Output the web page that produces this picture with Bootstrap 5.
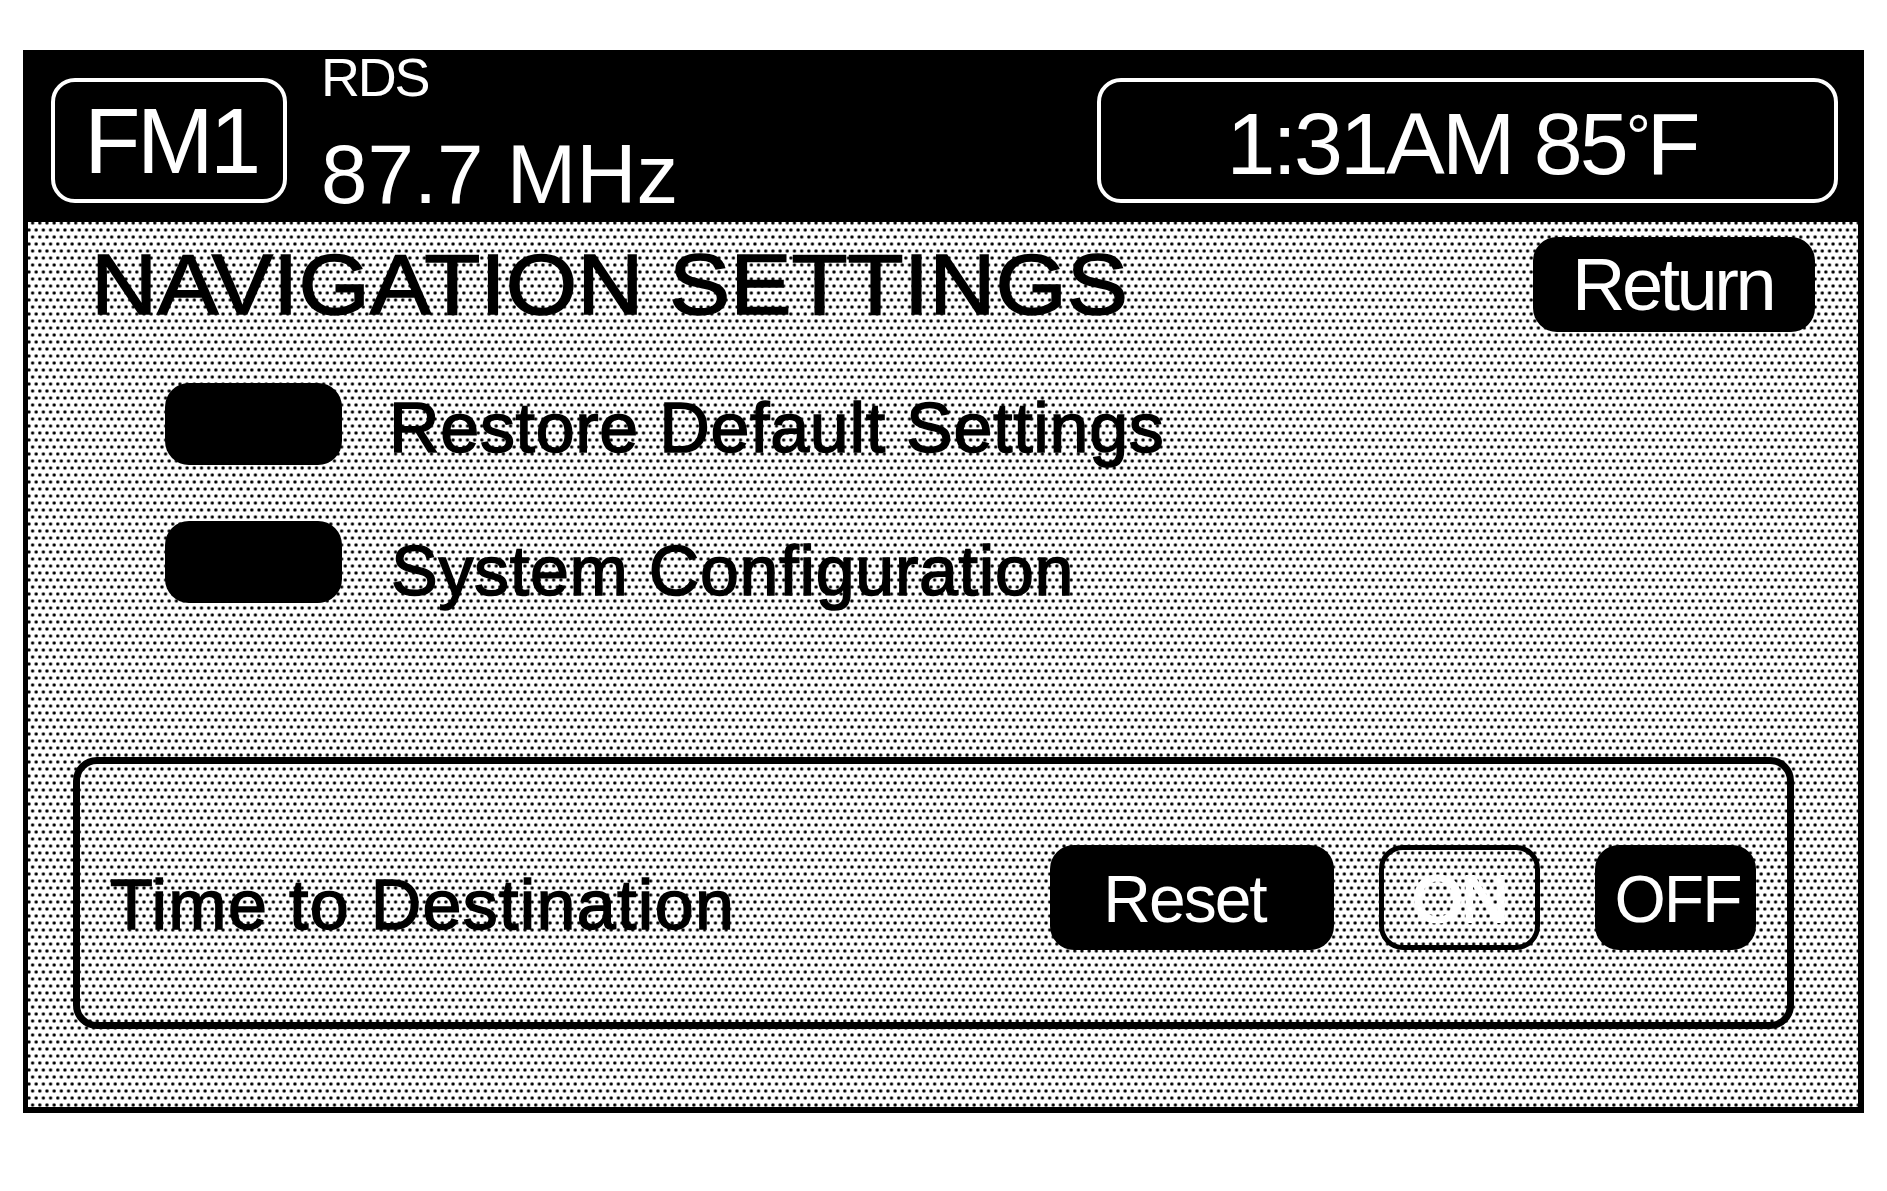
<!DOCTYPE html>
<html lang="en">
  <head>
    <meta charset="UTF-8" />
    <title>Navigation Settings</title>
    <link
      rel="stylesheet"
      href="https://cdn.jsdelivr.net/npm/bootstrap@5.3.0/dist/css/bootstrap.min.css"
    />
    <style>
      body {
        background: #fff;
        color: #000;
        font-family: "Liberation Sans", Arial, sans-serif;
      }
      .radio-frame {
        width: 1841px;
        margin: 50px 0 0 23px;
        border: 5px solid #000;
        border-right-width: 6px;
        border-bottom-width: 6px;
      }
      .top-bar {
        height: 167px;
        background: #000;
        color: #fff;
        padding: 23px 20px 19px 23px;
      }
      .outline-box {
        height: 125px;
        border: 4px solid #fff;
        border-radius: 24px;
        line-height: 1;
      }
      .band-box {
        width: 236px;
        font-size: 92px;
        letter-spacing: -3.5px;
        padding-left: 4px;
      }
      .clock-box {
        width: 741px;
        font-size: 88px;
        letter-spacing: -2.9px;
        padding: 6px 11px 0 0;
      }
      .deg-mark {
        font-size: 62px;
        line-height: 0;
        vertical-align: 16px;
        letter-spacing: -4px;
      }
      .tune-info {
        margin: -28px 0 -19px 34px;
        line-height: 1;
      }
      .rds-text {
        font-size: 54px;
        letter-spacing: -2.2px;
        height: 56px;
      }
      .freq-text {
        font-size: 83.5px;
        margin-top: 27px;
      }
      .dot-panel {
        height: 885px;
        padding: 15px 43px 78px 45px;
        background-color: #fff;
        background-image:
          radial-gradient(circle at 3.6px 3.5px, #000 1.3px, transparent 1.9px),
          radial-gradient(circle at 3.6px 3.5px, #000 1.3px, transparent 1.9px);
        background-size: 7.2px 14px;
        background-position: -2.6px 4.5px, 1px -2.5px;
      }
      .title-text {
        font-size: 85px;
        line-height: 95px;
        margin-left: 18px;
        -webkit-text-stroke: 1.5px #000;
        transform: scaleX(1.08);
        transform-origin: left center;
        white-space: nowrap;
      }
      .black-pill {
        background: #000;
        color: #fff;
        border: 0;
        padding: 0;
        line-height: 1;
        border-radius: 24px;
      }
      .return-pill {
        width: 282px;
        height: 95px;
        font-size: 74px;
        letter-spacing: -3.5px;
        padding-right: 3px;
      }
      .option-row {
        margin-left: 92px;
        height: 82px;
        gap: 47px;
      }
      .option-row + .option-row {
        margin-top: 56px;
      }
      .first-option {
        margin-top: 51px;
      }
      .option-pill {
        width: 177px;
        height: 82px;
      }
      .option-label,
      .trip-label {
        font-size: 70px;
        line-height: 1;
        letter-spacing: 0.7px;
        -webkit-text-stroke: 1.5px #000;
        white-space: nowrap;
      }
      .first-option .option-label {
        padding-top: 7px;
      }
      .second-option .option-label {
        padding: 17px 0 0 2px;
      }
      .trip-box {
        height: 272px;
        margin: 154px 21px 0 0;
        border: 7px solid #000;
        border-radius: 24px;
        padding: 81px 31px 0 30px;
      }
      .trip-label {
        letter-spacing: 1.3px;
        margin-top: 25px;
      }
      .trip-btns {
        margin-left: auto;
      }
      .trip-btn {
        height: 105px;
        font-size: 66px;
        letter-spacing: -2px;
        padding-top: 3px;
      }
      .reset-pill {
        width: 284px;
        margin-right: 45px;
        padding-right: 15px;
      }
      .on-pill {
        width: 161px;
        margin-right: 55px;
        background: transparent;
        border: 5px solid #000;
        color: #fff;
        -webkit-text-stroke: 2px #fff;
      }
      .off-pill {
        width: 161px;
        padding-left: 4px;
      }
    </style>
  </head>

  <body>
    <div class="radio-frame">
      <!-- Header -->
      <div class="top-bar d-flex">
        <div class="outline-box band-box d-flex align-items-center justify-content-center">FM1</div>
        <div class="tune-info">
          <div class="rds-text">RDS</div>
          <div class="freq-text">87.7 MHz</div>
        </div>
        <div class="outline-box clock-box d-flex align-items-center justify-content-center ms-auto">
          <span>1:31AM 85<span class="deg-mark">°</span>F</span>
        </div>
      </div>

      <div class="dot-panel">
        <div class="d-flex justify-content-between">
          <div class="title-text">NAVIGATION SETTINGS</div>
          <button class="black-pill return-pill" type="button">Return</button>
        </div>

        <div class="option-row first-option d-flex align-items-center">
          <button class="black-pill option-pill" type="button" aria-label="Restore Default Settings"></button>
          <span class="option-label">Restore Default Settings</span>
        </div>
        <div class="option-row second-option d-flex align-items-center">
          <button class="black-pill option-pill" type="button" aria-label="System Configuration"></button>
          <span class="option-label">System Configuration</span>
        </div>

        <!-- Time to destination -->
        <div class="trip-box d-flex align-items-start">
          <span class="trip-label">Time to Destination</span>
          <div class="trip-btns d-flex">
            <button class="black-pill trip-btn reset-pill" type="button">Reset</button>
            <button class="black-pill trip-btn on-pill" type="button">ON</button>
            <button class="black-pill trip-btn off-pill" type="button">OFF</button>
          </div>
        </div>
      </div>
    </div>
    <script src="https://cdn.jsdelivr.net/npm/bootstrap@5.3.0/dist/js/bootstrap.bundle.min.js"></script>
  </body>
</html>
